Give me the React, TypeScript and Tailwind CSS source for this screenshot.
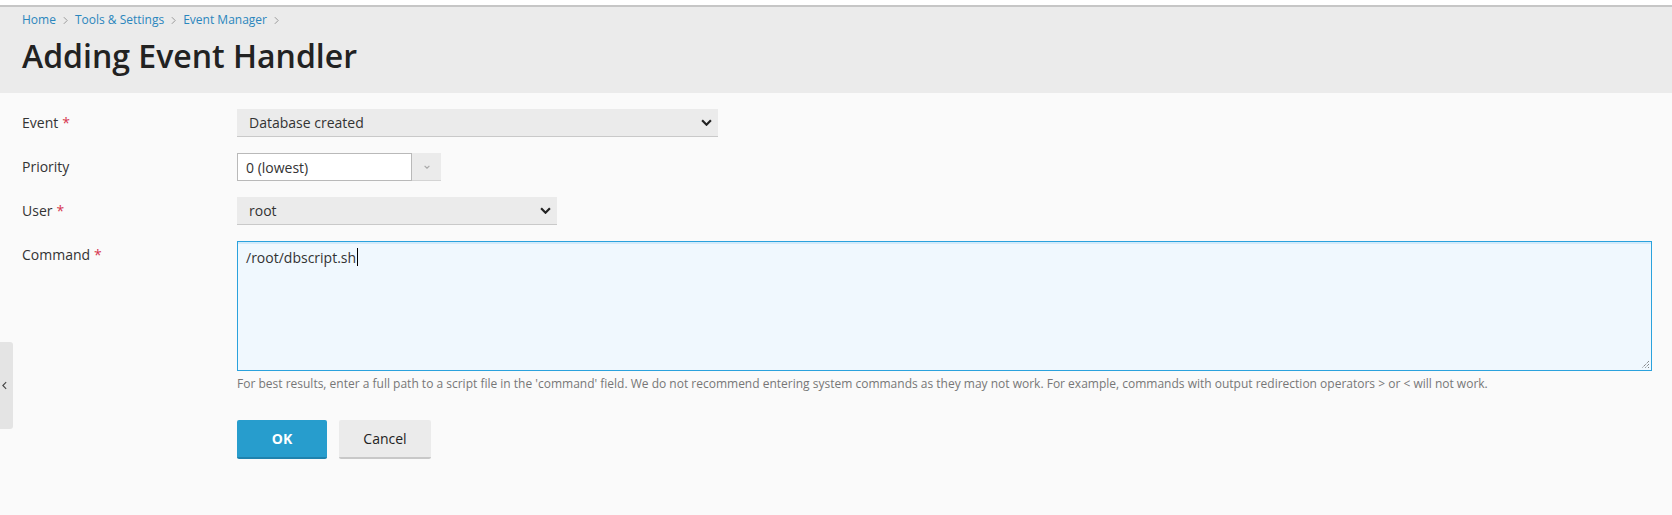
import React from "react";

const Chevron = ({ className = "" }: { className?: string }) => (
  <svg viewBox="0 0 10 6" className={className} fill="none">
    <path d="M1 1l4 4 4-4" stroke="currentColor" strokeWidth="2" />
  </svg>
);

const Crumb = ({ children }: { children: React.ReactNode }) => (
  <span className="flex items-center">
    <a className="text-[#2a86bd]">{children}</a>
    <svg viewBox="0 0 6 10" className="mx-[7px] h-[9px] w-[5px] text-[#9a9a9a]" fill="none">
      <path d="M1 1l4 4-4 4" stroke="currentColor" strokeWidth="1.2" />
    </svg>
  </span>
);

const Label = ({ text, required }: { text: string; required?: boolean }) => (
  <div className="h-[28px] leading-[28px] text-[14px] text-[#333]">
    {text}
    {required && <span className="ml-[4px] text-[#d6364f]">*</span>}
  </div>
);

const Select = ({ value, width }: { value: string; width: string }) => (
  <div
    className={`flex h-[28px] items-center justify-between bg-[#ebebeb] border-b border-[#c9c9c9] pl-[12px] pr-[6px] text-[14px] text-[#333] ${width}`}
  >
    <span>{value}</span>
    <Chevron className="h-[7px] w-[11px] text-[#222]" />
  </div>
);

export default function App() {
  return (
    <div className="relative min-h-screen bg-[#fafafa] font-['Open_Sans',sans-serif] text-[#333]">
      <div className="h-[5px] bg-white" />
      <header className="h-[88px] border-t-2 border-[#c6c6c6] bg-[#ebebeb] px-[22px] pt-[5px]">
        <nav className="flex h-[16px] items-center text-[12px] leading-[16px]">
          <Crumb>Home</Crumb>
          <Crumb>Tools &amp; Settings</Crumb>
          <Crumb>Event Manager</Crumb>
        </nav>
        <h1 className="mt-[8px] text-[32px] font-semibold leading-[40px] text-[#222]">Adding Event Handler</h1>
      </header>

      <main className="pl-[22px] pr-[20px] pt-[16px]">
        <div className="grid grid-cols-[215px_1fr] gap-y-[16px]">
          <Label text="Event" required />
          <Select value="Database created" width="w-[481px]" />

          <Label text="Priority" />
          <div className="flex h-[28px] w-[204px]">
            <div className="flex flex-1 items-center border border-[#b9b9b9] bg-white pl-[8px] text-[14px] text-[#333]">
              0 (lowest)
            </div>
            <div className="flex w-[29px] items-center justify-center border-b border-[#d4d4d4] bg-[#ebebeb]">
              <Chevron className="h-[4px] w-[6px] text-[#aaa]" />
            </div>
          </div>

          <Label text="User" required />
          <Select value="root" width="w-[320px]" />

          <Label text="Command" required />
          <div>
            <div className="relative h-[130px] border border-[#2ba2dd] bg-[#f0f8fe] shadow-[inset_0_2px_0_#d3ebfb] px-[8px] pt-[3px] text-[14px] leading-[22px] text-[#333]">
              /root/dbscript.sh
              <span className="ml-[1px] inline-block h-[18px] w-[1px] translate-y-[3px] bg-black" />
              <svg viewBox="0 0 10 10" className="absolute bottom-[1px] right-[1px] h-[10px] w-[10px]">
                <path d="M9 2L2 9M9 5L5 9M9 8L8 9" stroke="#555" strokeWidth="1" strokeDasharray="1 1" />
              </svg>
            </div>
            <p className="mt-[5px] text-[12px] leading-[16px] text-[#777]">
              For best results, enter a full path to a script file in the 'command' field. We do not recommend
              entering system commands as they may not work. For example, commands with output redirection
              operators &gt; or &lt; will not work.
            </p>
            <div className="mt-[28px] flex gap-[12px]">
              <button className="h-[39px] w-[90px] rounded-[2px] border-b-2 border-[#1f82ad] bg-[#279dcd] text-[14px] font-bold text-white">
                OK
              </button>
              <button className="h-[39px] w-[92px] rounded-[2px] border-b-2 border-[#c8c8c8] bg-[#ebebeb] text-[14px] font-medium text-[#222]">
                Cancel
              </button>
            </div>
          </div>
        </div>
      </main>

      <div className="absolute left-0 top-[342px] flex h-[87px] w-[13px] items-center rounded-r-[3px] bg-[#e4e4e4] pl-[2px]">
        <svg viewBox="0 0 6 10" className="h-[9px] w-[5px] text-[#444]" fill="none">
          <path d="M5 1L1 5l4 4" stroke="currentColor" strokeWidth="1.3" />
        </svg>
      </div>
    </div>
  );
}
